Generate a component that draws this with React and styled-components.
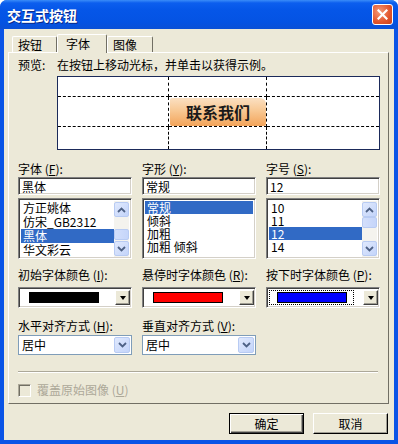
import React from 'react';
import styled, { createGlobalStyle } from 'styled-components';

const Global = createGlobalStyle`
  html, body { margin: 0; padding: 0; background: #fff; }
  body { font-family: "Noto Sans CJK SC", "Noto Sans", sans-serif; font-size: 12px; color: #000; }
  * { box-sizing: border-box; }
`;

const FACE = '#ECE9D8';

const Window = styled.div`
  width: 398px;
  height: 444px;
  display: flex;
  flex-direction: column;
  background: #0A54E6;
  border-radius: 7px 7px 0 0;
  overflow: hidden;
`;

const TitleBar = styled.div`
  height: 29px;
  flex: none;
  display: flex;
  align-items: center;
  justify-content: space-between;
  padding: 0 5px 0 7px;
  background: linear-gradient(#3A8CF8 0px, #0C5EEE 3px, #0556E8 10px, #0453E3 22px, #0A50D6 29px);
`;

const Title = styled.span`
  color: #fff;
  font-weight: bold;
  font-size: 14px;
  line-height: 16px;
  text-shadow: 1px 1px 0 #0A2A8A;
`;

const CloseBtn = styled.div`
  width: 21px;
  height: 21px;
  border: 1px solid #fff;
  border-radius: 3px;
  background: radial-gradient(circle at 35% 35%, #F49A78, #E2552C 60%, #C8401A);
  display: flex;
  align-items: center;
  justify-content: center;
`;

const Body = styled.div`
  flex: 1;
  margin: 0 4px 4px 4px;
  background: ${FACE};
  display: flex;
  flex-direction: column;
  padding: 6px 5px 0 4px;
`;

const TabRow = styled.div`
  display: flex;
  align-items: flex-end;
  height: 18px;
  padding-left: 4px;
  position: relative;
  z-index: 1;
  margin-bottom: -1px;
`;

const Tab = styled.div`
  width: ${p => p.$w}px;
  height: ${p => (p.$active ? 19 : 16)}px;
  background: ${FACE};
  border-top: 1px solid #fff;
  border-left: 1px solid #fff;
  border-right: 1px solid #716F64;
  border-radius: 2px 2px 0 0;
  display: flex;
  align-items: center;
  padding-left: ${p => (p.$active ? 8 : 5)}px;
  font-size: 12px;
  line-height: 14px;
  margin-bottom: ${p => (p.$active ? '0' : '1px')};
`;

const Panel = styled.div`
  height: 352px;
  flex: none;
  background: ${FACE};
  border-top: 1px solid #fff;
  border-left: 1px solid #fff;
  border-right: 1px solid #716F64;
  border-bottom: 1px solid #716F64;
  padding: 5px 8px 0 9px;
  display: flex;
  flex-direction: column;
`;

const PreviewGrid = styled.div`
  display: grid;
  grid-template-columns: 39px 1fr;
  row-gap: 4px;
`;

const Text = styled.span`
  font-size: 12px;
  line-height: 14px;
  white-space: nowrap;
  color: ${p => (p.$disabled ? '#ACA899' : '#000')};
`;

const PreviewBox = styled.div`
  grid-column: 2;
  height: 74px;
  border: 1px solid #1B2A5A;
  background: #fff;
  display: grid;
  grid-template-columns: 111px 98px 1fr;
  grid-template-rows: 20px 30px 1fr;
`;

const Cell = styled.div`
  border-right: ${p => (p.$r ? '1px dashed #000' : 'none')};
  border-bottom: ${p => (p.$b ? '1px dashed #000' : 'none')};
  display: flex;
  align-items: stretch;
  justify-content: stretch;
`;

const SampleButton = styled.div`
  flex: 1;
  margin: 1px 0 0 1px;
  border-radius: 2px 6px 2px 2px;
  background: linear-gradient(#FBE0C2 0%, #F8C893 45%, #F3A45A 100%);
  display: flex;
  align-items: center;
  justify-content: center;
  font-weight: bold;
  font-size: 16px;
  color: #1A1A1A;
`;

const ThreeCols = styled.div`
  display: grid;
  grid-template-columns: 114px 114px 114px;
  column-gap: 10px;
  margin-top: ${p => p.$mt}px;
`;

const Field = styled.div`
  display: flex;
  flex-direction: column;
`;

const Label = styled.div`
  font-size: 12px;
  line-height: 14px;
  height: 14px;
  white-space: nowrap;
  & u { text-decoration: underline; }
`;

const sunken = `
  border-top: 1px solid #808080;
  border-left: 1px solid #808080;
  border-bottom: 1px solid #fff;
  border-right: 1px solid #fff;
  box-shadow: inset 1px 1px 0 #404040, inset -1px -1px 0 #D4D0C8;
`;

const TextInput = styled.div`
  margin-top: 1px;
  height: 18px;
  background: #fff;
  ${sunken}
  padding: 2px 3px;
  font-size: 12px;
  line-height: 14px;
`;

const ListBox = styled.div`
  margin-top: 3px;
  height: 61px;
  background: #fff;
  ${sunken}
  padding: 2px 2px 1px 2px;
  display: flex;
  overflow: hidden;
`;

const Items = styled.div`
  flex: 1;
  display: flex;
  flex-direction: column;
  overflow: hidden;
`;

const Item = styled.div`
  height: ${p => p.$h}px;
  line-height: ${p => p.$h}px;
  font-size: 12px;
  padding-left: 2px;
  white-space: nowrap;
  flex: none;
  background: ${p => (p.$sel ? '#316AC5' : 'transparent')};
  color: ${p => (p.$sel ? '#fff' : '#000')};
`;

const ScrollBar = styled.div`
  width: 15px;
  flex: none;
  background: #F4F3EE;
  display: flex;
  flex-direction: column;
  justify-content: space-between;
  padding: 1px 0;
`;

const SBtn = styled.div`
  height: 15px;
  border: 1px solid #B8CBF3;
  border-radius: 2px;
  background: linear-gradient(135deg, #E0E9FD, #C3D4FA);
  display: flex;
  align-items: center;
  justify-content: center;
`;

const Thumb = styled.div`
  height: 11px;
  margin-top: ${p => p.$top}px;
  border: 1px solid #B8CBF3;
  border-radius: 2px;
  background: linear-gradient(90deg, #D3DFFB, #C5D5FA);
`;

const ScrollMid = styled.div`
  flex: 1;
`;

const Chevron = ({ up, color = '#4D6185' }) => (
  <svg width="9" height="6" viewBox="0 0 9 6">
    <polyline
      points={up ? '1,5 4.5,1.5 8,5' : '1,1 4.5,4.5 8,1'}
      fill="none"
      stroke={color}
      strokeWidth="1.8"
    />
  </svg>
);

const ColorCombo = styled.div`
  margin-top: 5px;
  height: 21px;
  background: #fff;
  ${sunken}
  display: flex;
  align-items: center;
  padding: 2px 1px 2px 2px;
`;

const SwatchWrap = styled.div`
  flex: 1;
  height: 15px;
  margin-right: 9px;
  padding: 1px 6px 1px 7px;
  border: 1px dotted ${p => (p.$focus ? '#000' : 'transparent')};
  display: flex;
  align-items: center;
`;

const Swatch = styled.div`
  flex: 1;
  height: 11px;
  background: ${p => p.$c};
  border: 1px solid #000;
`;

const ClassicBtn = styled.div`
  width: 15px;
  height: 15px;
  flex: none;
  background: ${FACE};
  border-top: 1px solid #fff;
  border-left: 1px solid #fff;
  border-right: 1px solid #404040;
  border-bottom: 1px solid #404040;
  box-shadow: inset -1px -1px 0 #A09E94;
  display: flex;
  align-items: center;
  justify-content: center;
`;

const Tri = styled.div`
  width: 0;
  height: 0;
  border-left: 3.5px solid transparent;
  border-right: 3.5px solid transparent;
  border-top: 4px solid #000;
  margin-top: 1px;
`;

const SelectBox = styled.div`
  margin-top: 2px;
  height: 20px;
  background: #fff;
  border: 1px solid #7F9DB9;
  display: flex;
  align-items: center;
  padding: 1px 1px 1px 3px;
`;

const SelectText = styled.div`
  flex: 1;
  font-size: 12px;
  line-height: 14px;
`;

const SelBtn = styled(SBtn)`
  width: 16px;
  height: 16px;
`;

const Separator = styled.div`
  margin-top: 16px;
  height: 2px;
  width: 360px;
  border-top: 1px solid #ACA899;
  border-bottom: 1px solid #fff;
`;

const CheckRow = styled.div`
  margin-top: 10px;
  display: flex;
  align-items: center;
  gap: 6px;
`;

const CheckBox = styled.div`
  width: 13px;
  height: 13px;
  border-top: 1px solid #ACA899;
  border-left: 1px solid #ACA899;
  border-right: 1px solid #fff;
  border-bottom: 1px solid #fff;
  box-shadow: inset 1px 1px 0 #716F64;
  background: ${FACE};
`;

const ButtonRow = styled.div`
  display: flex;
  justify-content: flex-end;
  gap: 9px;
  margin-top: 9px;
  padding-right: 1px;
`;

const DlgButton = styled.div`
  width: 75px;
  height: 21px;
  display: flex;
  align-items: center;
  justify-content: center;
  font-size: 12px;
  background: ${FACE};
  border-top: 1px solid ${p => (p.$def ? '#000' : '#fff')};
  border-left: 1px solid ${p => (p.$def ? '#000' : '#fff')};
  border-right: 1px solid #000;
  border-bottom: 1px solid #000;
  box-shadow: ${p =>
    p.$def
      ? 'inset 1px 1px 0 #fff, inset -1px -1px 0 #404040, inset -2px -2px 0 #A09E94'
      : 'inset -1px -1px 0 #A09E94'};
`;

const fonts = [
  { t: '方正姚体' },
  { t: '仿宋_GB2312' },
  { t: '黑体', sel: true },
  { t: '华文彩云' },
];
const styles = [
  { t: '常规', sel: true },
  { t: '倾斜' },
  { t: '加粗' },
  { t: '加粗 倾斜' },
];
const sizes = [{ t: '10' }, { t: '11' }, { t: '12', sel: true }, { t: '14' }];

const Scroll = ({ thumbTop }) => (
  <ScrollBar>
    <SBtn><Chevron up /></SBtn>
    <ScrollMid><Thumb $top={thumbTop} /></ScrollMid>
    <SBtn><Chevron /></SBtn>
  </ScrollBar>
);

const List = ({ items, h, scroll, thumbTop }) => (
  <ListBox>
    <Items>
      {items.map(it => (
        <Item key={it.t} $h={h} $sel={it.sel}>{it.t}</Item>
      ))}
    </Items>
    {scroll && <Scroll thumbTop={thumbTop} />}
  </ListBox>
);

const Combo = ({ color, focus }) => (
  <ColorCombo>
    <SwatchWrap $focus={focus}><Swatch $c={color} /></SwatchWrap>
    <ClassicBtn><Tri /></ClassicBtn>
  </ColorCombo>
);

const Select = ({ value }) => (
  <SelectBox>
    <SelectText>{value}</SelectText>
    <SelBtn><Chevron /></SelBtn>
  </SelectBox>
);

export default function App() {
  return (
    <>
      <Global />
      <Window>
        <TitleBar>
          <Title>交互式按钮</Title>
          <CloseBtn>
            <svg width="11" height="11" viewBox="0 0 11 11">
              <path d="M1.5 1.5 L9.5 9.5 M9.5 1.5 L1.5 9.5" stroke="#fff" strokeWidth="2.2" strokeLinecap="square" />
            </svg>
          </CloseBtn>
        </TitleBar>
        <Body>
          <TabRow>
            <Tab $w={45}>按钮</Tab>
            <Tab $w={50} $active>字体</Tab>
            <Tab $w={46}>图像</Tab>
          </TabRow>
          <Panel>
            <PreviewGrid>
              <Text>预览:</Text>
              <Text>在按钮上移动光标，并单击以获得示例。</Text>
              <PreviewBox>
                <Cell $r $b />
                <Cell $r $b />
                <Cell $b />
                <Cell $r $b />
                <Cell $r $b><SampleButton>联系我们</SampleButton></Cell>
                <Cell $b />
                <Cell $r />
                <Cell $r />
                <Cell />
              </PreviewBox>
            </PreviewGrid>

            <ThreeCols $mt={12}>
              <Field>
                <Label>字体 (<u>F</u>):</Label>
                <TextInput>黑体</TextInput>
                <List items={fonts} h={14} scroll thumbTop={12} />
              </Field>
              <Field>
                <Label>字形 (<u>Y</u>):</Label>
                <TextInput>常规</TextInput>
                <List items={styles} h={13} />
              </Field>
              <Field>
                <Label>字号 (<u>S</u>):</Label>
                <TextInput>12</TextInput>
                <List items={sizes} h={13} scroll thumbTop={0} />
              </Field>
            </ThreeCols>

            <ThreeCols $mt={9}>
              <Field>
                <Label>初始字体颜色 (<u>I</u>):</Label>
                <Combo color="#000000" />
              </Field>
              <Field>
                <Label>悬停时字体颜色 (<u>R</u>):</Label>
                <Combo color="#FF0000" />
              </Field>
              <Field>
                <Label>按下时字体颜色 (<u>P</u>):</Label>
                <Combo color="#0000FF" focus />
              </Field>
            </ThreeCols>

            <ThreeCols $mt={11}>
              <Field>
                <Label>水平对齐方式 (<u>H</u>):</Label>
                <Select value="居中" />
              </Field>
              <Field>
                <Label>垂直对齐方式 (<u>V</u>):</Label>
                <Select value="居中" />
              </Field>
            </ThreeCols>

            <Separator />
            <CheckRow>
              <CheckBox />
              <Text $disabled>覆盖原始图像 (<u>U</u>)</Text>
            </CheckRow>
          </Panel>
          <ButtonRow>
            <DlgButton $def>确定</DlgButton>
            <DlgButton>取消</DlgButton>
          </ButtonRow>
        </Body>
      </Window>
    </>
  );
}
